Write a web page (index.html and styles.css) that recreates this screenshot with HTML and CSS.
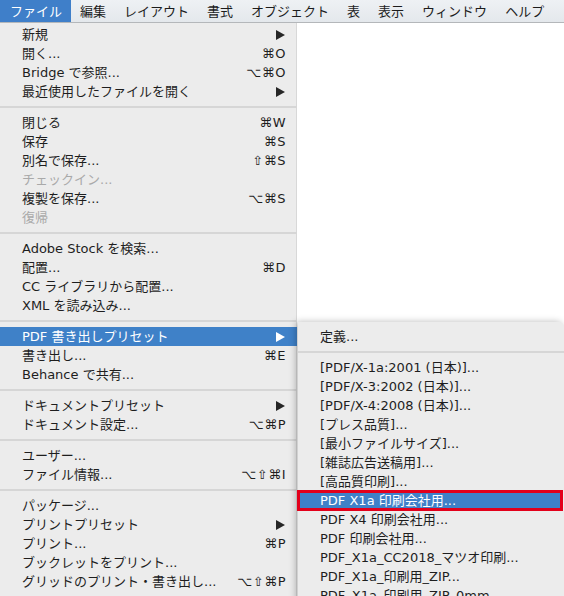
FILE: index.html
```html
<!DOCTYPE html>
<html lang="ja">
<head>
<meta charset="utf-8">
<title>ファイル</title>
<link rel="stylesheet" href="styles.css">
</head>
<body>
<div class="menubar">
  <span class="mb-item active">ファイル</span>
  <span class="mb-item">編集</span>
  <span class="mb-item">レイアウト</span>
  <span class="mb-item">書式</span>
  <span class="mb-item">オブジェクト</span>
  <span class="mb-item">表</span>
  <span class="mb-item">表示</span>
  <span class="mb-item">ウィンドウ</span>
  <span class="mb-item">ヘルプ</span>
</div>
<div class="screen">
  <div class="menu">
    <div class="row"><span>新規</span><span class="arrow"></span></div>
    <div class="row"><span>開く...</span><span class="key">⌘O</span></div>
    <div class="row"><span>Bridge で参照...</span><span class="key">⌥⌘O</span></div>
    <div class="row"><span>最近使用したファイルを開く</span><span class="arrow"></span></div>
    <div class="sep"></div>
    <div class="row"><span>閉じる</span><span class="key">⌘W</span></div>
    <div class="row"><span>保存</span><span class="key">⌘S</span></div>
    <div class="row"><span>別名で保存...</span><span class="key">⇧⌘S</span></div>
    <div class="row disabled"><span>チェックイン...</span></div>
    <div class="row"><span>複製を保存...</span><span class="key">⌥⌘S</span></div>
    <div class="row disabled"><span>復帰</span></div>
    <div class="sep"></div>
    <div class="row"><span>Adobe Stock を検索...</span></div>
    <div class="row"><span>配置...</span><span class="key">⌘D</span></div>
    <div class="row"><span>CC ライブラリから配置...</span></div>
    <div class="row"><span>XML を読み込み...</span></div>
    <div class="sep"></div>
    <div class="row hl"><span>PDF 書き出しプリセット</span><span class="arrow"></span></div>
    <div class="row"><span>書き出し...</span><span class="key">⌘E</span></div>
    <div class="row"><span>Behance で共有...</span></div>
    <div class="sep"></div>
    <div class="row"><span>ドキュメントプリセット</span><span class="arrow"></span></div>
    <div class="row"><span>ドキュメント設定...</span><span class="key">⌥⌘P</span></div>
    <div class="sep"></div>
    <div class="row"><span>ユーザー...</span></div>
    <div class="row"><span>ファイル情報...</span><span class="key">⌥⇧⌘I</span></div>
    <div class="sep"></div>
    <div class="row"><span>パッケージ...</span></div>
    <div class="row"><span>プリントプリセット</span><span class="arrow"></span></div>
    <div class="row"><span>プリント...</span><span class="key">⌘P</span></div>
    <div class="row"><span>ブックレットをプリント...</span></div>
    <div class="row"><span>グリッドのプリント・書き出し...</span><span class="key">⌥⇧⌘P</span></div>
  </div>
  <div class="side">
    <div class="sub">
      <div class="row"><span>定義...</span></div>
      <div class="sep"></div>
      <div class="row"><span>[PDF/X-1a:2001 (日本)]...</span></div>
      <div class="row"><span>[PDF/X-3:2002 (日本)]...</span></div>
      <div class="row"><span>[PDF/X-4:2008 (日本)]...</span></div>
      <div class="row"><span>[プレス品質]...</span></div>
      <div class="row"><span>[最小ファイルサイズ]...</span></div>
      <div class="row"><span>[雑誌広告送稿用]...</span></div>
      <div class="row"><span>[高品質印刷]...</span></div>
      <div class="row hl boxed"><span>PDF X1a 印刷会社用...</span></div>
      <div class="row"><span>PDF X4 印刷会社用...</span></div>
      <div class="row"><span>PDF 印刷会社用...</span></div>
      <div class="row"><span>PDF_X1a_CC2018_マツオ印刷...</span></div>
      <div class="row"><span>PDF_X1a_印刷用_ZIP...</span></div>
      <div class="row"><span>PDF_X1a_印刷用_ZIP_0mm</span></div>
    </div>
  </div>
</div>
</body>
</html>
```

FILE: styles.css
```css
html, body {
  margin: 0;
  padding: 0;
  width: 564px;
  height: 596px;
  overflow: hidden;
  background: #ffffff;
}

body {
  font-family: "DejaVu Sans", "Noto Sans CJK JP", sans-serif;
  font-size: 13px;
  color: #1e1e1e;
}

.menubar {
  display: flex;
  height: 22px;
  line-height: 22px;
  background: linear-gradient(#eef1f4, #e4e8ec);
  border-bottom: 1px solid #b4b7ba;
}

.mb-item {
  padding: 0 9px;
  font-family: "Noto Sans CJK JP", sans-serif;
  color: #1c1c1c;
}

.mb-item.active {
  background: #3f7fc9;
  color: #ffffff;
  padding: 0 9px 0 10px;
}

.screen {
  display: flex;
  align-items: flex-start;
}

.menu {
  width: 297px;
  flex: none;
  background: #ececec;
  padding-top: 2px;
  height: 600px;
  box-shadow: inset -1px 0 0 #d8d8d8;
}

.row {
  display: flex;
  justify-content: space-between;
  align-items: center;
  height: 19px;
  line-height: 19px;
  padding: 0 11px 0 22px;
  white-space: nowrap;
}

.row.disabled {
  color: #a9a9a9;
}

.row.hl {
  background: #3f81c8;
  color: #ffffff;
}

.key {
  font-family: "DejaVu Sans", sans-serif;
  letter-spacing: 0.5px;
}

.arrow {
  width: 0;
  height: 0;
  margin-right: 1px;
  border-left: 9px solid #262626;
  border-top: 5px solid transparent;
  border-bottom: 5px solid transparent;
}

.row.hl .arrow {
  border-left-color: #ffffff;
}

.sep {
  height: 2px;
  margin: 5px 0;
  background: #d6d6d6;
}

.side {
  flex: 1;
  padding-top: 299px;
}

.sub {
  margin-left: 1px;
  background: #ececec;
  border-top-right-radius: 5px;
  padding-top: 5px;
  height: 300px;
  box-shadow: -2px 0 7px rgba(0, 0, 0, 0.28);
}

.sub .row {
  padding-left: 22px;
}

.row.boxed {
  outline: 3px solid #e3001b;
  outline-offset: -2px;
  margin-right: 2px;
}
```
